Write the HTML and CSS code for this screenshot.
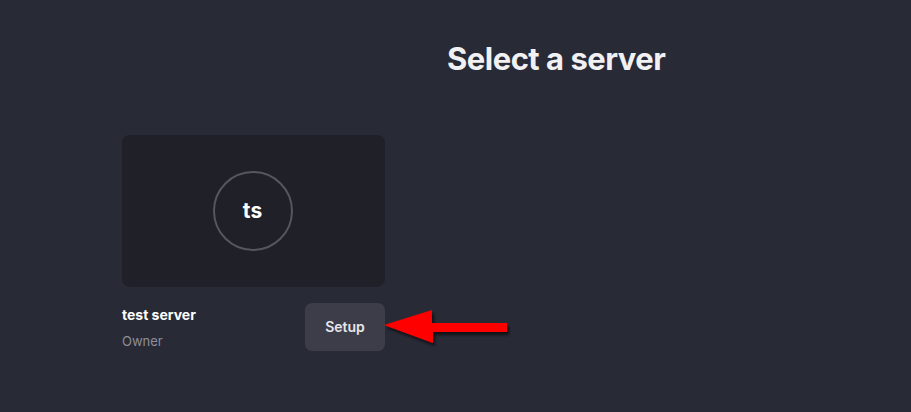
FILE: index.html
```html
<!DOCTYPE html>
<html>
<head>
<meta charset="utf-8">
<link rel="stylesheet" href="styles.css">
</head>
<body>
<main class="page">
  <h1 class="title">Select a server</h1>
  <section class="servers">
    <div class="server">
      <div class="thumb"><div class="avatar">ts</div></div>
      <div class="meta">
        <div class="info">
          <div class="name">test server</div>
          <div class="role">Owner</div>
        </div>
        <button class="setup">Setup</button>
        <svg class="arrow" width="140" height="50" viewBox="0 0 140 50">
          <defs>
            <filter id="sh" x="-20%" y="-40%" width="140%" height="180%">
              <feDropShadow dx="2" dy="3" stdDeviation="1.5" flood-color="#000" flood-opacity="0.6"/>
            </filter>
          </defs>
          <polygon filter="url(#sh)" fill="#ff0000" points="0,22 48,7 48,20 123,20 123,29 49,29 49,40"/>
        </svg>
      </div>
    </div>
  </section>
</main>
</body>
</html>
```
FILE: styles.css
```css
html, body {
  margin: 0;
  padding: 0;
  background: #282a36;
  height: 100%;
}
body {
  font-family: Inter, "Noto Sans", sans-serif;
  color: #f2f2f5;
}
.page {
  padding: 40px 0 0 122px;
}
.title {
  margin: 0 0 0 325px;
  font-size: 31px;
  font-weight: 700;
  letter-spacing: -0.5px;
  line-height: 38px;
  color: #f1f1f4;
}
.servers {
  margin-top: 57px;
  display: flex;
}
.server {
  width: 263px;
}
.thumb {
  height: 152px;
  background: #1f2028;
  border-radius: 8px;
  display: flex;
  align-items: center;
  justify-content: center;
}
.avatar {
  width: 76px;
  height: 74px;
  padding-bottom: 2px;
  border: 2px solid #55565e;
  border-radius: 50%;
  display: flex;
  align-items: center;
  justify-content: center;
  font-size: 21px;
  font-weight: 700;
  color: #ffffff;
  margin-left: -2px;
}
.meta {
  margin-top: 16px;
  display: flex;
  justify-content: space-between;
  align-items: flex-start;
  position: relative;
}
.info {
  padding-top: 3px;
}
.name {
  font-size: 14px;
  font-weight: 700;
  color: #ffffff;
  line-height: 18px;
}
.role {
  margin-top: 9px;
  font-size: 13px;
  color: #8e8f97;
  line-height: 16px;
}
.setup {
  width: 80px;
  height: 48px;
  border: none;
  border-radius: 7px;
  background: #3c3d48;
  color: #e6e6ea;
  font-family: Inter, "Noto Sans", sans-serif;
  font-size: 14px;
  font-weight: 600;
  padding: 0 0 2px 0;
}
.arrow {
  position: absolute;
  left: 262px;
  top: 0;
}
```
